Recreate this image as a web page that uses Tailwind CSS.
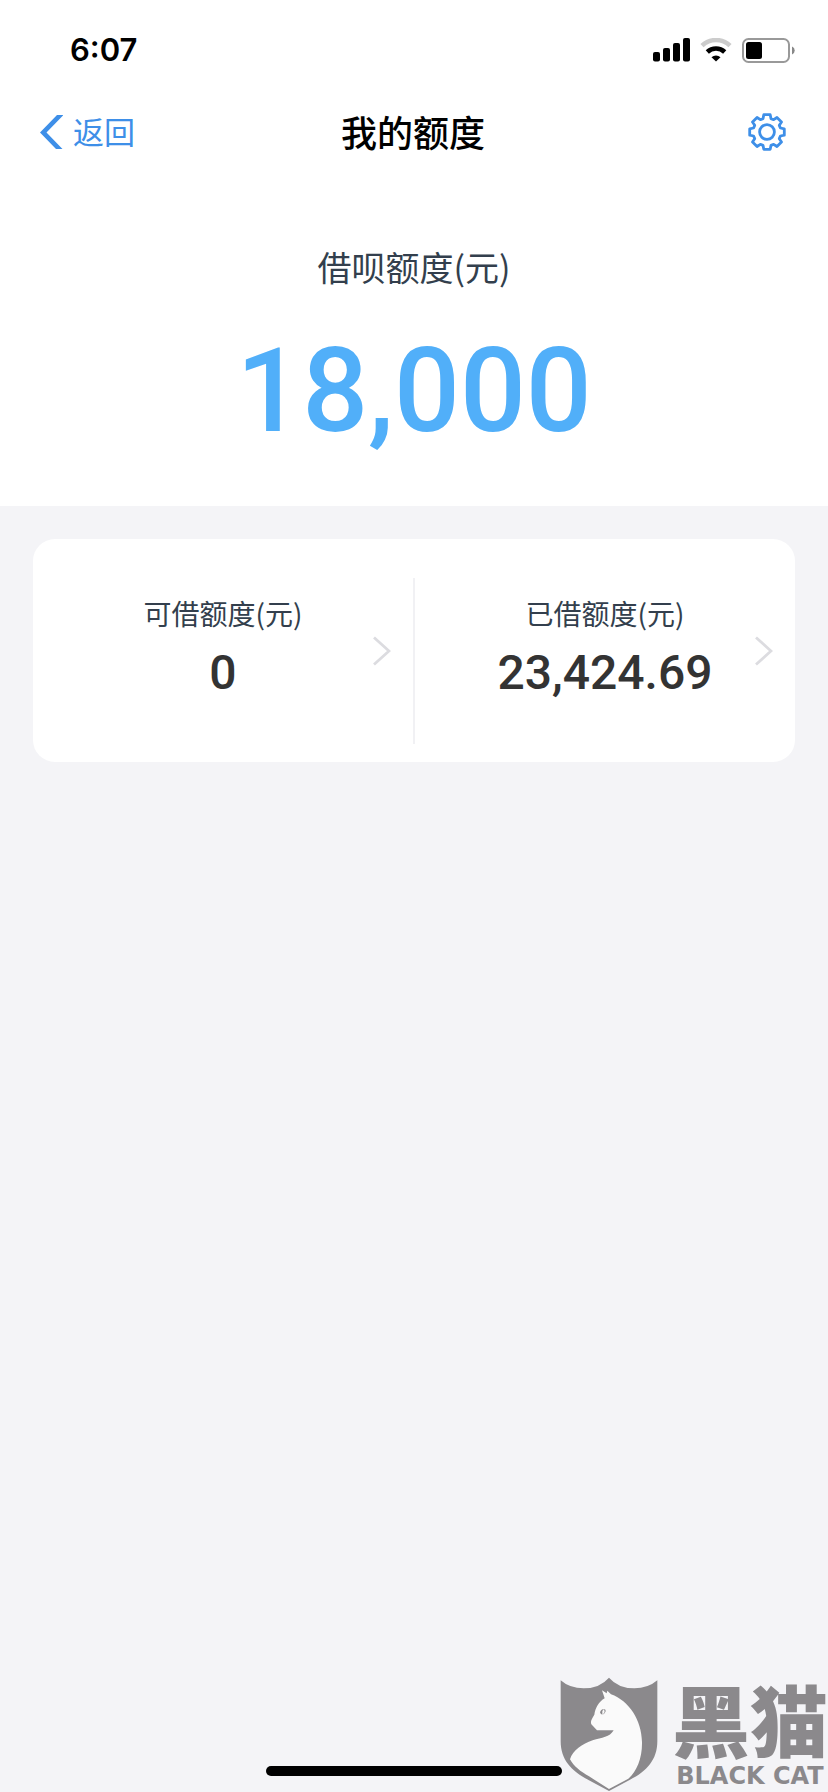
<!DOCTYPE html>
<html lang="zh-CN">
<head>
  <meta charset="UTF-8" />
  <meta name="viewport" content="width=device-width, initial-scale=1.0"/>
  <title>我的额度</title>
  <script src="https://cdn.jsdelivr.net/npm/@tailwindcss/browser@4"></script>
</head>
<body class="relative flex min-h-screen flex-col bg-[#f4f4f7] font-['Noto_Sans_CJK_SC',sans-serif] text-[#333]">

  <div class="bg-white">
    <!-- Status bar -->
    <div class="flex h-[88px] items-center justify-between pt-3 pr-[33px] pl-[70px]">
      <span class="font-[Inter,sans-serif] text-[31px] font-semibold text-black">6:07</span>
      <div class="flex items-center gap-2.5">
        <svg class="h-6 w-[37px]" viewBox="0 0 37 24" fill="#000">
          <rect x="0" y="14" width="7" height="9.500" rx="2"/>
          <rect x="10" y="10" width="7" height="13.500" rx="2"/>
          <rect x="20" y="5" width="7" height="18.500" rx="2"/>
          <rect x="30" y="0" width="7" height="23.500" rx="2"/>
        </svg>
        <svg class="h-6 w-8" viewBox="0 0 32 24">
          <path d="M2 7.600a20.500 20.500 0 0 1 28 0" fill="none" stroke="#ccc" stroke-width="4.600"/>
          <path d="M7.300 14a12.500 12.500 0 0 1 17.400 0" fill="none" stroke="#000" stroke-width="4.600"/>
          <path d="M16 23.500l-4.500-4.300a6.500 6.500 0 0 1 9 0z" fill="#000"/>
        </svg>
        <svg class="h-[25px] w-[53px]" viewBox="0 0 53 25">
          <rect x="1" y="1" width="46" height="23" rx="5.500" fill="none" stroke="#999" stroke-width="2"/>
          <rect x="4" y="4" width="16" height="17" rx="2.500" fill="#000"/>
          <path d="M50 8.500a4.300 4.300 0 0 1 0 8z" fill="#888"/>
        </svg>
      </div>
    </div>

    <!-- Nav -->
    <header class="grid h-[88px] grid-cols-[1fr_auto_1fr] items-center pr-[42px] pl-10">
      <button type="button" class="flex items-center gap-2.5 justify-self-start text-[31px] leading-[44px] text-[#3e8fe8]">
        <svg class="h-[34px] w-[23px]" viewBox="0 0 23 34" fill="currentColor"><path d="M17 0h6.500L6.500 17.500 22.500 34H16L0 17.500z"/></svg>
        <span class="pb-0.5">返回</span>
      </button>
      <h1 class="pb-0.5 text-4xl font-medium text-black">我的额度</h1>
      <button type="button" aria-label="设置" class="justify-self-end text-[#3e8fe8]">
        <svg class="size-[38px]" viewBox="-19 -19 38 38" fill="none" stroke="currentColor" stroke-width="2.800" stroke-linejoin="round">
          <path d="M-4-13.400-3.200-17.300 3.200-17.300 4-13.400 6.650-12.300 9.970-14.500 14.500-9.970 12.300-6.650 13.400-4 17.300-3.200 17.300 3.200 13.400 4 12.300 6.650 14.500 9.970 9.970 14.500 6.650 12.300 4 13.400 3.200 17.300-3.200 17.300-4 13.400-6.650 12.300-9.970 14.500-14.500 9.970-12.300 6.650-13.400 4-17.300 3.200-17.300-3.200-13.400-4-12.300-6.650-14.500-9.970-9.970-14.500-6.650-12.300z"/>
          <circle r="7.400"/>
        </svg>
      </button>
    </header>

    <!-- Total limit -->
    <section class="flex flex-col items-center gap-10 pt-[66px] pb-14 text-center">
      <h2 class="text-[34px] leading-[50px] text-[#333f4d]">借呗额度(元)</h2>
      <p class="font-[Roboto,sans-serif] text-[116px] leading-[118px] font-medium text-[#51aff9]">18,000</p>
    </section>
  </div>

  <!-- Available / used -->
  <main class="flex-1 px-[33px] pt-[33px]">
    <div class="flex h-[223px] items-center rounded-[22px] bg-white">
      <a href="#available" class="grid flex-1 grid-cols-[18px_1fr_18px] items-center px-[22px]">
        <span class="col-start-2 flex flex-col gap-4 pb-3 text-center">
          <span class="text-[28px] leading-10 text-[#333f4d]">可借额度(元)</span>
          <span class="font-[Roboto,sans-serif] text-5xl font-medium">0</span>
        </span>
        <svg class="h-[30px] w-[18px]" viewBox="0 0 18 30" fill="none" stroke="#dcdce0" stroke-width="2.800"><path d="M1 1.500 16 15 1 28.500"/></svg>
      </a>
      <div class="mt-5 h-[166px] w-0.5 bg-[#f1f1f4]"></div>
      <a href="#used" class="grid flex-1 grid-cols-[18px_1fr_18px] items-center px-[22px]">
        <span class="col-start-2 flex flex-col gap-4 pb-3 text-center">
          <span class="text-[28px] leading-10 text-[#333f4d]">已借额度(元)</span>
          <span class="font-[Roboto,sans-serif] text-5xl font-medium">23,424.69</span>
        </span>
        <svg class="h-[30px] w-[18px]" viewBox="0 0 18 30" fill="none" stroke="#dcdce0" stroke-width="2.800"><path d="M1 1.500 16 15 1 28.500"/></svg>
      </a>
    </div>
  </main>

  <!-- Home indicator -->
  <div class="flex justify-center pb-4">
    <div class="h-2.5 w-[296px] rounded-full bg-black"></div>
  </div>

  <!-- Watermark -->
  <div class="absolute right-0 bottom-0 flex items-end gap-3.5 text-[#8b898c]">
    <svg class="h-[115px] w-[98px]" viewBox="26 20 294 345">
      <path d="M28 30Q55 54 97 54Q145 54 173 22Q201 54 249 54Q290 54 318 30V213C318 268 286 304 236 328L173 362L110 328C60 302 28 268 28 213z" fill="currentColor"/>
      <path d="M160 84L152 60L166 69L168 61L179 72C233 91 271 150 272 215C273 262 257 302 231 325L173 356L113 318C88 304 67 288 56 267C64 240 93 221 124 210C152 202 175 201 187 180L137 180L120 162C116 151 123 144 129 133C132 112 143 94 160 84z" fill="#fafafa"/>
      <path d="M146 126Q150 116 158 116L153 122 153 133Q147 132 146 126zM158 116Q164 117 163 123Q161 130 154 133L160 125z" fill="currentColor"/>
    </svg>
    <div class="flex flex-col items-center gap-1">
      <span class="text-[78px] leading-[76px] font-black">黑猫</span>
      <span class="font-['DejaVu_Sans',sans-serif] text-2xl leading-8 font-bold whitespace-nowrap">BLACK CAT</span>
    </div>
  </div>

</body>
</html>
